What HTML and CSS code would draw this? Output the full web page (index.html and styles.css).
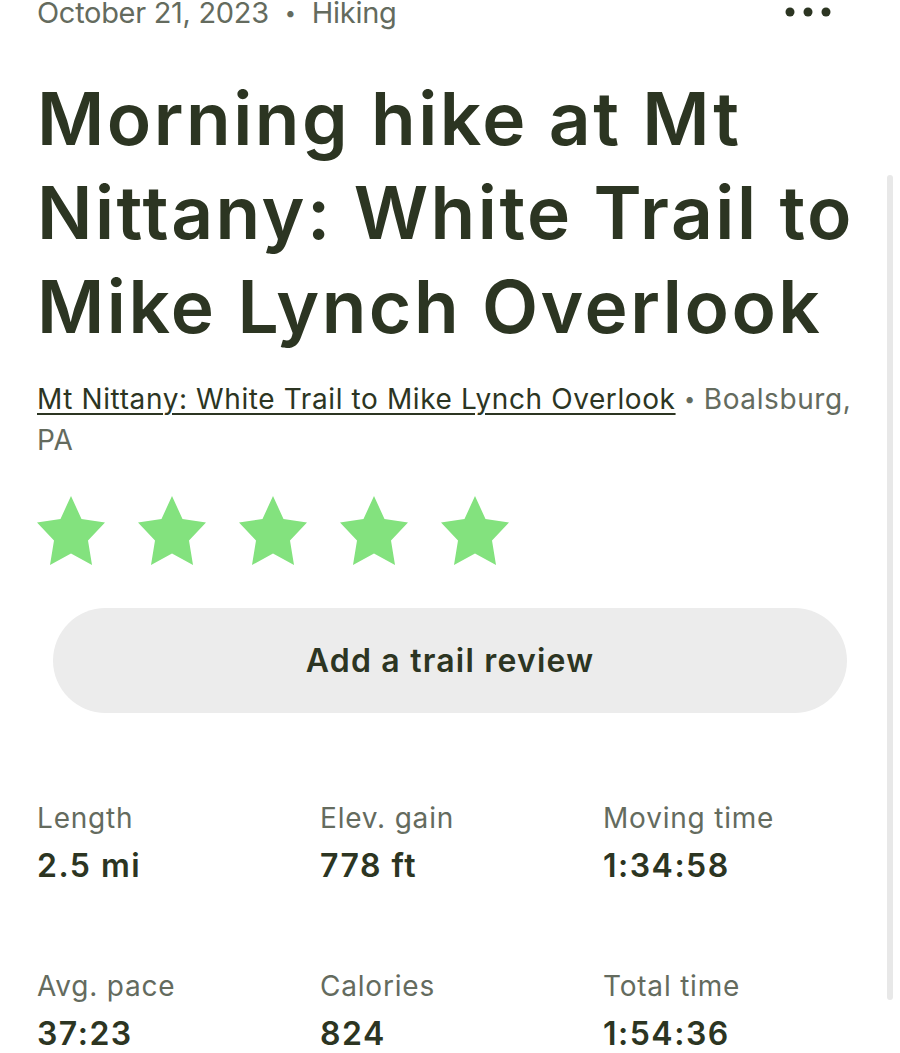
FILE: index.html
```html
<!DOCTYPE html>
<html lang="en">
<head>
<meta charset="utf-8">
<title>Morning hike at Mt Nittany</title>
<link rel="stylesheet" href="styles.css">
</head>
<body>
<div class="page">
  <main class="content">
    <header class="meta-row">
      <div class="meta">October 21, 2023<span class="sep">•</span>Hiking</div>
      <button class="more" aria-label="More options">
        <svg width="46" height="10" viewBox="0 0 46 10"><circle cx="5" cy="5" r="4.5"/><circle cx="23" cy="5" r="4.5"/><circle cx="41" cy="5" r="4.5"/></svg>
      </button>
    </header>
    <h1 class="title">Morning hike at Mt Nittany: White Trail to Mike Lynch Overlook</h1>
    <p class="trail"><a href="#" class="trail-link">Mt Nittany: White Trail to Mike Lynch Overlook</a> <span class="sep-small">•</span> Boalsburg, PA</p>
    <div class="stars">
      <svg class="star" viewBox="0 0 68 69"><path d="M34 0 L44.5 23 L68 26.5 L51 44.5 L55 69 L34 57.5 L13 69 L17 44.5 L0 26.5 L23.5 23 Z"/></svg>
      <svg class="star" viewBox="0 0 68 69"><path d="M34 0 L44.5 23 L68 26.5 L51 44.5 L55 69 L34 57.5 L13 69 L17 44.5 L0 26.5 L23.5 23 Z"/></svg>
      <svg class="star" viewBox="0 0 68 69"><path d="M34 0 L44.5 23 L68 26.5 L51 44.5 L55 69 L34 57.5 L13 69 L17 44.5 L0 26.5 L23.5 23 Z"/></svg>
      <svg class="star" viewBox="0 0 68 69"><path d="M34 0 L44.5 23 L68 26.5 L51 44.5 L55 69 L34 57.5 L13 69 L17 44.5 L0 26.5 L23.5 23 Z"/></svg>
      <svg class="star" viewBox="0 0 68 69"><path d="M34 0 L44.5 23 L68 26.5 L51 44.5 L55 69 L34 57.5 L13 69 L17 44.5 L0 26.5 L23.5 23 Z"/></svg>
    </div>
    <button class="review-btn">Add a trail review</button>
    <section class="stats">
      <div class="stat"><div class="label">Length</div><div class="value">2.5 mi</div></div>
      <div class="stat"><div class="label">Elev. gain</div><div class="value">778 ft</div></div>
      <div class="stat"><div class="label">Moving time</div><div class="value">1:34:58</div></div>
      <div class="stat"><div class="label">Avg. pace</div><div class="value">37:23</div></div>
      <div class="stat"><div class="label">Calories</div><div class="value">824</div></div>
      <div class="stat"><div class="label">Total time</div><div class="value">1:54:36</div></div>
    </section>
  </main>
  <div class="scrollbar"><div class="thumb"></div></div>
</div>
</body>
</html>
```
FILE: styles.css
```css
* { box-sizing: border-box; }
html, body { margin: 0; padding: 0; background: #ffffff; }
body {
  font-family: Inter, "Noto Sans", sans-serif;
  color: #2c3522;
  width: 900px;
  height: 1053px;
  overflow: hidden;
}
.page {
  display: flex;
  width: 900px;
}
.content {
  width: 862px;
  padding: 0 0 0 37px;
  margin-top: -5px;
}
.meta-row {
  display: flex;
  justify-content: space-between;
  align-items: center;
  height: 36px;
  padding-right: 31px;
}
.meta {
  font-size: 29px;
  line-height: 36px;
  color: #646b5e;
  letter-spacing: -0.3px;
}
.sep { margin: 0 16px; font-size: 20px; line-height: 0; vertical-align: 3px; }
.more {
  border: 0;
  background: none;
  padding: 0;
  display: flex;
  margin-top: -2px;
}
.more svg { fill: #2c3522; }
.title {
  margin: 41px 0 0 0;
  font-size: 73px;
  line-height: 94px;
  font-weight: 600;
  letter-spacing: 2.5px;
  color: #2c3522;
}
.trail {
  margin: 25px 0 0 0;
  font-size: 28px;
  line-height: 41px;
  color: #646b5e;
  letter-spacing: 0.6px;
}
.trail-link {
  color: #2c3522;
  text-decoration: underline;
  text-decoration-thickness: 2px;
  text-underline-offset: 4px;
}
.sep-small { font-size: 20px; line-height: 0; letter-spacing: 0; vertical-align: 3px; }
.stars {
  display: flex;
  gap: 33px;
  margin-top: 35px;
}
.star { width: 68px; height: 69px; fill: #83e27e; }
.review-btn {
  display: block;
  width: 794px;
  height: 105px;
  margin: 43px 0 0 16px;
  border: 0;
  border-radius: 53px;
  background: #ececec;
  font-family: inherit;
  font-size: 32px;
  font-weight: 600;
  color: #2c3522;
  letter-spacing: 1.2px;
}
.stats {
  display: grid;
  grid-template-columns: 283px 283px 1fr;
  row-gap: 83px;
  margin-top: 87px;
}
.label {
  font-size: 28px;
  line-height: 36px;
  color: #646b5e;
  letter-spacing: 0.8px;
}
.value {
  margin-top: 11px;
  font-size: 32px;
  line-height: 38px;
  font-weight: 600;
  color: #2c3522;
  letter-spacing: 1.5px;
}
.scrollbar {
  width: 38px;
  padding: 175px 0 0 25px;
}
.thumb {
  width: 6px;
  height: 825px;
  background: #e8e8e8;
  border-radius: 3px;
}
```
